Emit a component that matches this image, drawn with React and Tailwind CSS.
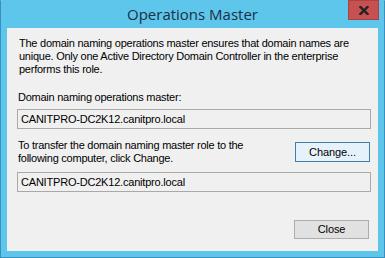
const Field = ({ value }) => (
	<div className="h-[20px] border border-[#a9a9a9] bg-[#f0f0f0] pl-[3px] text-[11px] tracking-[-0.2px] leading-[18px] text-black">
		{value}
	</div>
)

const Button = ({ children, primary }) => (
	<button
		className={
			primary
				? 'w-[75px] h-[20px] border border-[#3c7fb1] bg-[#e5f1fb] text-[11px] tracking-[-0.1px] leading-[18px] text-black'
				: 'w-[75px] h-[19px] border border-[#adadad] bg-[#e1e1e1] text-[11px] tracking-[-0.1px] leading-[17px] text-black'
		}
	>
		{children}
	</button>
)

export default function App() {
	return (
		<div className="w-[385px] h-[258px] bg-[#5ec6eb] border border-[#3b8fc0] border-t-[#5ec6eb] flex flex-col font-['Liberation_Sans',Arial,sans-serif]">
			<div className="relative h-[27px] shrink-0 flex items-center justify-center">
				<span className="text-[15px] text-[#1b2f45] font-['Open_Sans','Noto_Sans',sans-serif] leading-none mt-[-1px]">
					Operations Master
				</span>
				<div className="absolute right-[5px] top-[-1px] w-[31px] h-[20px] bg-[#c75050] border border-[#a8433f] flex items-center justify-center">
					<svg width="10" height="9" viewBox="0 0 10 9">
						<path d="M1.5 1 L8.5 8 M8.5 1 L1.5 8" stroke="#222" strokeWidth="2.4" strokeLinecap="square" />
					</svg>
				</div>
			</div>
			<div className="mx-[6px] h-[223px] bg-[#f0f0f0] pl-[10px] pr-[7px] pt-[9px] text-[11px] tracking-[-0.25px] leading-[13px] text-black">
				<p className="pl-[2px]">
					The domain naming operations master ensures that domain names are unique. Only one Active Directory Domain Controller in the enterprise performs this role.
				</p>
				<p className="pl-[1px] mt-[15px]">Domain naming operations master:</p>
				<div className="mt-[5px]">
					<Field value="CANITPRO-DC2K12.canitpro.local" />
				</div>
				<div className="mt-[10px] flex justify-between items-start">
					<p className="pl-[1px] w-[250px]">
						To transfer the domain naming master role to the following computer, click Change.
					</p>
					<div className="mt-[3px] mr-[1px]">
						<Button primary>Change...</Button>
					</div>
				</div>
				<div className="mt-[7px]">
					<Field value="CANITPRO-DC2K12.canitpro.local" />
				</div>
				<div className="mt-[28px] flex justify-end pr-[2px]">
					<Button>Close</Button>
				</div>
			</div>
		</div>
	)
}
